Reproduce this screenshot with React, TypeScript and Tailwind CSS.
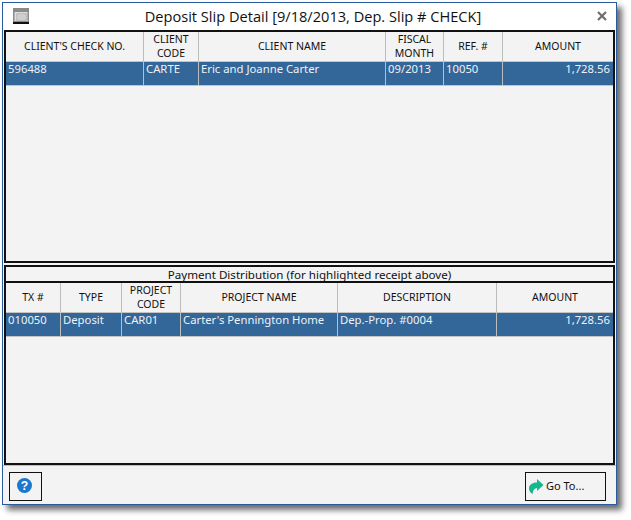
const font = "font-['Noto_Sans',sans-serif]";

type Col = { label: string[]; width: string; value: string; right?: boolean };

const checkCols: Col[] = [
  { label: ["CLIENT'S CHECK NO."], width: "w-[138px]", value: "596488" },
  { label: ["CLIENT", "CODE"], width: "w-[55px]", value: "CARTE" },
  { label: ["CLIENT NAME"], width: "w-[187px]", value: "Eric and Joanne Carter" },
  { label: ["FISCAL", "MONTH"], width: "w-[58px]", value: "09/2013" },
  { label: ["REF. #"], width: "w-[59px]", value: "10050" },
  { label: ["AMOUNT"], width: "flex-1", value: "1,728.56", right: true },
];

const distCols: Col[] = [
  { label: ["TX #"], width: "w-[55px]", value: "010050" },
  { label: ["TYPE"], width: "w-[61px]", value: "Deposit" },
  { label: ["PROJECT", "CODE"], width: "w-[59px]", value: "CAR01" },
  { label: ["PROJECT NAME"], width: "w-[157px]", value: "Carter's Pennington Home" },
  { label: ["DESCRIPTION"], width: "w-[159px]", value: "Dep.-Prop. #0004" },
  { label: ["AMOUNT"], width: "flex-1", value: "1,728.56", right: true },
];

function Grid({ cols }: { cols: Col[] }) {
  return (
    <>
      <div className="flex h-[30px] shrink-0 border-b border-[#c4c4c4]">
        {cols.map((c, i) => (
          <div
            key={c.label[0]}
            className={`${c.width} flex flex-col items-center justify-center pb-[1px] text-[10.5px] leading-[14px] text-[#111] ${
              i < cols.length - 1 ? "border-r border-[#bdbdbd]" : ""
            }`}
          >
            {c.label.map((l) => (
              <span key={l}>{l}</span>
            ))}
          </div>
        ))}
      </div>
      <div className="flex h-[24px] shrink-0 border-b border-[#c4c4c4] bg-[#336699] text-white">
        {cols.map((c, i) => (
          <div
            key={c.label[0]}
            className={`${c.width} px-[2px] text-[11.3px] leading-[14px] text-[#eef2f6] ${
              c.right ? "pr-[3px] text-right" : ""
            } ${i < cols.length - 1 ? "border-r border-[#bdbdbd]" : ""}`}
          >
            {c.value}
          </div>
        ))}
      </div>
    </>
  );
}

export default function App() {
  return (
    <div className={`${font} h-[520px] w-[631px] bg-white pl-[2px] pt-[2px]`}>
      <div className="flex h-[503px] w-[615px] flex-col border border-[#2b5a9e] bg-[#f3f3f3] shadow-[5px_5px_6px_#6b6b6b]">
        {/* title bar */}
        <div className="flex h-[27px] shrink-0 items-center bg-white pb-[1px] pl-[10px] pr-[6px]">
          <svg width="16" height="16" viewBox="0 0 16 16">
            <rect x="0" y="0" width="16" height="14" fill="#8a8a8a" />
            <rect x="0" y="14" width="16" height="2" fill="#111" />
            <rect x="1.5" y="4" width="13" height="9" fill="#dcdcdc" />
            <rect x="4" y="6" width="9" height="6" fill="#f5f5f5" stroke="#888" strokeWidth="0.7" />
            <path d="M5 8h7M5 10h7" stroke="#888" strokeWidth="0.7" />
          </svg>
          <div className="flex-1 pl-[1px] pr-[1px] text-center font-['Open_Sans',sans-serif] text-[14.6px] leading-[26px] text-[#111]">
            Deposit Slip Detail [9/18/2013, Dep. Slip # CHECK]
          </div>
          <svg width="10" height="10" viewBox="0 0 10 10" className="mr-[3px]">
            <path d="M1 1l8 8M9 1l-8 8" stroke="#6e6e6e" strokeWidth="2.2" />
          </svg>
        </div>

        {/* tables */}
        <div className="flex flex-1 flex-col px-[1px]">
          <div className="flex h-[233px] shrink-0 flex-col border-2 border-[#111]">
            <Grid cols={checkCols} />
          </div>
          <div className="mt-[2px] flex h-[200px] shrink-0 flex-col border-2 border-[#111]">
            <div className="h-[16px] shrink-0 border-b-2 border-[#111] text-center text-[11.6px] leading-[15px] text-[#111]">
              Payment Distribution (for highlighted receipt above)
            </div>
            <Grid cols={distCols} />
          </div>
        </div>

        {/* footer */}
        <div className="flex h-[39px] shrink-0 items-start justify-between border-t border-[#bdbdbd] pl-[6px] pr-[10px] pt-[6px]">
          <button className="flex h-[29px] w-[33px] items-center justify-center border border-[#111] pb-[2px] pr-[2px]">
            <svg width="15" height="15" viewBox="0 0 16 16">
              <circle cx="8" cy="8" r="8" fill="#1b78cf" />
              <text
                x="8"
                y="12.5"
                textAnchor="middle"
                fontSize="13"
                fontWeight="700"
                fill="#fff"
                fontFamily="Liberation Sans, sans-serif"
              >
                ?
              </text>
            </svg>
          </button>
          <button className="flex h-[29px] w-[81px] items-center gap-[2px] border border-[#111] pl-[3px] text-[11px] text-[#111]">
            <svg width="15" height="15" viewBox="0 0 15 15">
              <path d="M8 0L14.5 6 8 12V9C5.5 9 4 11 3.5 15 1.5 14 0 12 0 9.5 0 6 3 3.5 8 3.5z" fill="#14b88f" />
            </svg>
            Go To...
          </button>
        </div>
      </div>
    </div>
  );
}
